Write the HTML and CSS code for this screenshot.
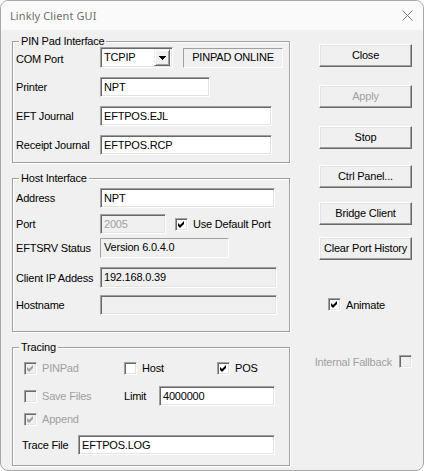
FILE: index.html
```html
<!DOCTYPE html>
<html>
<head>
<meta charset="utf-8">
<title>Linkly Client GUI</title>
<link rel="stylesheet" href="styles.css">
</head>
<body>
<div class="window">
  <div class="titlebar">
    <span class="title">Linkly Client GUI</span>
    <svg class="close-x" width="11" height="11" viewBox="0 0 11 11"><path d="M0.5 0.5 L10.5 10.5 M10.5 0.5 L0.5 10.5" stroke="#7a7a7a" stroke-width="1" fill="none"/></svg>
  </div>
  <div class="client">
    <div class="left">
      <div class="group g-pin">
        <div class="group-title">PIN Pad Interface</div>
        <div class="row r-com">
          <span class="lbl">COM Port</span>
          <div class="combo">
            <span class="combo-text">TCPIP</span>
            <span class="combo-btn"><svg width="7" height="4" viewBox="0 0 7 4"><path d="M0 0h7v1h-1v1h-1v1h-1v1h-1v-1h-1v-1h-1v-1h-1z" fill="#000"/></svg></span>
          </div>
          <div class="static st-online">PINPAD ONLINE</div>
        </div>
        <div class="row">
          <span class="lbl">Printer</span>
          <div class="edit w-printer">NPT</div>
        </div>
        <div class="row">
          <span class="lbl">EFT Journal</span>
          <div class="edit w-journal">EFTPOS.EJL</div>
        </div>
        <div class="row">
          <span class="lbl">Receipt Journal</span>
          <div class="edit w-journal">EFTPOS.RCP</div>
        </div>
      </div>

      <div class="group g-host">
        <div class="group-title">Host Interface</div>
        <div class="row r-address">
          <span class="lbl">Address</span>
          <div class="edit w-address">NPT</div>
        </div>
        <div class="row r-port">
          <span class="lbl">Port</span>
          <div class="edit dis w-port">2005</div>
          <label class="cb cb-port"><span class="box"><svg width="13" height="13" viewBox="0 0 13 13"><path d="M3 5 L5 7 L9 3 L9 6 L5 10 L3 8 Z" fill="#000"/></svg></span><span>Use Default Port</span></label>
        </div>
        <div class="row r-status">
          <span class="lbl">EFTSRV Status</span>
          <div class="static st-version">Version 6.0.4.0</div>
        </div>
        <div class="row r-ip">
          <span class="lbl">Client IP Addess</span>
          <div class="edit ro w-ip">192.168.0.39</div>
        </div>
        <div class="row r-host">
          <span class="lbl">Hostname</span>
          <div class="edit ro w-ip"></div>
        </div>
      </div>

      <div class="group g-trace">
        <div class="group-title">Tracing</div>
        <div class="trow t1">
          <label class="cb c1 disabled"><span class="box"><svg width="13" height="13" viewBox="0 0 13 13"><path d="M3 5 L5 7 L9 3 L9 6 L5 10 L3 8 Z" fill="#a0a0a0"/></svg></span><span>PINPad</span></label>
          <label class="cb c2"><span class="box"></span><span>Host</span></label>
          <label class="cb c3"><span class="box"><svg width="13" height="13" viewBox="0 0 13 13"><path d="M3 5 L5 7 L9 3 L9 6 L5 10 L3 8 Z" fill="#000"/></svg></span><span>POS</span></label>
        </div>
        <div class="trow t2">
          <label class="cb c1 disabled"><span class="box"></span><span>Save Files</span></label>
          <span class="lbl-limit">Limit</span>
          <div class="edit w-limit">4000000</div>
        </div>
        <div class="trow t3">
          <label class="cb c1 disabled"><span class="box"><svg width="13" height="13" viewBox="0 0 13 13"><path d="M3 5 L5 7 L9 3 L9 6 L5 10 L3 8 Z" fill="#a0a0a0"/></svg></span><span>Append</span></label>
        </div>
        <div class="trow t4">
          <span class="lbl-trace">Trace File</span>
          <div class="edit w-trace">EFTPOS.LOG</div>
        </div>
      </div>
    </div>

    <div class="right">
      <div class="btn b-close">Close</div>
      <div class="btn b-apply disabled">Apply</div>
      <div class="btn b-stop">Stop</div>
      <div class="btn b-ctrl">Ctrl Panel...</div>
      <div class="btn b-bridge">Bridge Client</div>
      <div class="btn b-clear">Clear Port History</div>
      <label class="cb animate"><span class="box"><svg width="13" height="13" viewBox="0 0 13 13"><path d="M3 5 L5 7 L9 3 L9 6 L5 10 L3 8 Z" fill="#000"/></svg></span><span>Animate</span></label>
      <label class="cb fallback disabled"><span>Internal Fallback</span><span class="box"></span></label>
    </div>
  </div>
</div>
</body>
</html>
```

FILE: styles.css
```css
* { box-sizing: border-box; }
html, body { margin: 0; padding: 0; }
body {
  width: 424px;
  height: 471px;
  overflow: hidden;
  background: #ffffff;
  font-family: "Liberation Sans", Arial, sans-serif;
  font-size: 11px;
  letter-spacing: -0.2px;
  color: #000;
}
.window {
  width: 424px;
  height: 471px;
  border: 1px solid #a8a8a8;
  border-radius: 8px;
  overflow: hidden;
  background: #f0f0f0;
  display: flex;
  flex-direction: column;
}
.titlebar {
  height: 29px;
  flex: none;
  background: #fafafa;
  display: flex;
  align-items: center;
  justify-content: space-between;
  padding: 0 10px 0 9px;
}
.title {
  font-family: "Noto Sans", sans-serif;
  font-size: 11px;
  letter-spacing: 0.1px;
  color: #6e6e6e;
}
.close-x { display: block; }
.client {
  flex: 1;
  display: flex;
  padding: 11px 0 0 11px;
}
.left {
  width: 278px;
  flex: none;
  display: flex;
  flex-direction: column;
  gap: 15px;
}
.group {
  border: 1px solid #a0a0a0;
  box-shadow: inset 1px 1px 0 #fff, 1px 1px 0 #fff;
  display: flex;
  flex-direction: column;
}
.group-title {
  align-self: flex-start;
  height: 13px;
  line-height: 13px;
  margin: -7px 0 -6px 6px;
  padding: 0 2px;
  background: #f0f0f0;
}
.g-pin { height: 122px; }
.g-host { height: 154px; }
.g-trace { height: 119px; }

.row {
  display: flex;
  align-items: center;
  height: 20px;
  padding-left: 3px;
}
.g-pin .r-com { margin-top: 5px; }
.g-pin .row + .row { margin-top: 9px; }
.r-com { height: 21px; }
.r-com .lbl { padding-top: 3px; }
.lbl { width: 84px; flex: none; }

.edit {
  height: 20px;
  border: 1px solid;
  border-color: #a0a0a0 #ffffff #ffffff #a0a0a0;
  box-shadow: inset 1px 1px 0 #696969, inset -1px -1px 0 #e3e3e3;
  background: #fff;
  padding: 0 3px 1px 3px;
  display: flex;
  align-items: center;
  white-space: nowrap;
}
.edit.dis { background: #f0f0f0; color: #a0a0a0; }
.edit.ro { background: #f0f0f0; }
.static {
  height: 20px;
  border: 1px solid;
  border-color: #a0a0a0 #ffffff #ffffff #a0a0a0;
  display: flex;
  align-items: center;
  padding: 0 3px 2px 3px;
  white-space: nowrap;
}
.st-online { width: 100px; margin-left: 10px; justify-content: center; }
.st-version { width: 129px; }

.w-printer { width: 110px; }
.w-journal { width: 172px; }
.w-address { width: 175px; }
.w-port { width: 66px; }
.w-ip { width: 177px; }
.w-limit { width: 116px; }
.w-trace { width: 197px; }

.combo {
  width: 73px;
  height: 21px;
  border: 1px solid;
  border-color: #a0a0a0 #ffffff #ffffff #a0a0a0;
  box-shadow: inset 1px 1px 0 #696969, inset -1px -1px 0 #e3e3e3;
  background: #fff;
  display: flex;
  align-items: center;
  padding: 2px 2px 2px 3px;
}
.combo-text { flex: 1; padding-bottom: 2px; }
.combo-btn {
  width: 16px;
  height: 17px;
  flex: none;
  background: #f0f0f0;
  border: 1px solid;
  border-color: #f0f0f0 #696969 #696969 #f0f0f0;
  box-shadow: inset 1px 1px 0 #fff, inset -1px -1px 0 #a0a0a0;
  display: flex;
  align-items: center;
  justify-content: center;
  padding-top: 1px;
}
.combo-btn svg { display: block; }

.r-address { margin-top: 9px; }
.r-port { margin-top: 6px; }
.r-status { margin-top: 4px; }
.r-ip { margin-top: 9px; height: 21px; }
.r-ip .edit { height: 21px; }
.r-host { margin-top: 7px; }

.cb {
  display: flex;
  align-items: center;
  gap: 5px;
  white-space: nowrap;
}
.box {
  width: 13px;
  height: 13px;
  flex: none;
  border: 1px solid;
  border-color: #a0a0a0 #ffffff #ffffff #a0a0a0;
  box-shadow: inset 1px 1px 0 #696969, inset -1px -1px 0 #e3e3e3;
  background: #fff;
}
.box svg { display: block; margin: -1px; }
.cb.disabled { color: #a0a0a0; }
.cb.disabled .box { background: #f0f0f0; }
.cb-port { margin-left: 9px; }

.trow {
  display: flex;
  align-items: center;
  height: 20px;
  padding-left: 11px;
}
.t1 { margin-top: 10px; }
.t2 { margin-top: 8px; }
.t3 { margin-top: 3px; }
.t4 { margin-top: 6px; padding-left: 9px; }
.c1 { width: 100px; }
.c2 { width: 93px; }
.lbl-limit { width: 35px; flex: none; }
.lbl-trace { width: 56px; flex: none; }

.right {
  width: 93px;
  margin-left: 29px;
  padding-top: 3px;
  display: flex;
  flex-direction: column;
}
.btn {
  height: 23px;
  border: 1px solid;
  border-color: #ffffff #696969 #696969 #ffffff;
  box-shadow: inset -1px -1px 0 #a0a0a0, inset 1px 1px 0 #e3e3e3;
  background: #f0f0f0;
  display: flex;
  align-items: center;
  justify-content: center;
  padding-bottom: 1px;
  white-space: nowrap;
}
.btn.disabled { color: #a0a0a0; }
.b-apply { margin-top: 18px; }
.b-stop { margin-top: 18px; }
.b-ctrl { margin-top: 16px; }
.b-bridge { margin-top: 14px; }
.b-clear { margin-top: 12px; }
.animate { margin-top: 38px; padding-left: 9px; height: 13px; }
.fallback {
  margin-top: 44px;
  margin-left: -6px;
  height: 13px;
  justify-content: flex-end;
  gap: 7px;
}
```
